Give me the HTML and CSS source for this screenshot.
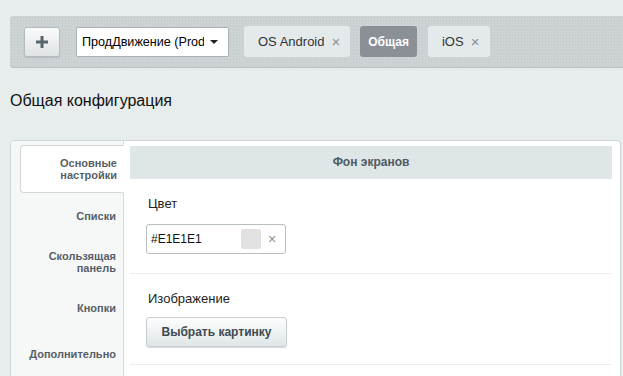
FILE: index.html
```
<!DOCTYPE html>
<html lang="ru">
<head>
<meta charset="UTF-8" />
<title>Общая конфигурация</title>
<link rel="stylesheet" href="styles.css">
</head>
<body>

<div class="toolbar">
  <button class="add-btn" type="button">
    <svg width="14" height="14" viewBox="0 0 14 14"><path d="M7 1v12M1 7h12" stroke="#5a666d" stroke-width="3"/></svg>
  </button>
  <div class="app-select">
    <span class="app-select-text">ПродДвижение (ProdDvizhenie)</span>
    <span class="app-select-arrow"></span>
  </div>
  <div class="platform-tab">OS Android <span class="tab-close">×</span></div>
  <div class="platform-tab active">Общая</div>
  <div class="platform-tab ios">iOS <span class="tab-close">×</span></div>
</div>

<h1 class="page-title">Общая конфигурация</h1>

<div class="config-panel">
  <div class="side-tabs">
    <div class="side-tab active">Основные<br>настройки</div>
    <div class="side-tab">Списки</div>
    <div class="side-tab">Скользящая<br>панель</div>
    <div class="side-tab">Кнопки</div>
    <div class="side-tab">Дополнительно</div>
  </div>
  <div class="panel-body">
    <div class="section-head">Фон экранов</div>
    <div class="field">
      <div class="field-label">Цвет</div>
      <div class="color-input">
        <span class="color-value">#E1E1E1</span>
        <span class="color-swatch"></span>
        <span class="color-clear">×</span>
      </div>
    </div>
    <div class="field">
      <div class="field-label">Изображение</div>
      <button class="pick-btn" type="button">Выбрать картинку</button>
    </div>
  </div>
</div>

</body>
</html>
```

FILE: styles.css
```
body {
  margin: 0;
  background: #e7ecec;
  font-family: 'Liberation Sans', Arial, sans-serif;
  color: #222;
  overflow: hidden;
  height: 376px;
}

/* верхняя панель */
.toolbar {
  display: flex; align-items: center;
  margin: 16px -20px 0 10px;
  height: 51px;
  padding-left: 14px;
  background-color: #cdd3d5;
  background-image: radial-gradient(#c2c8ca 0.8px, transparent 1px);
  background-size: 3px 3px;
  border-bottom: 1px solid #b9c0c3;
  border-radius: 3px 0 0 3px;
}
.add-btn {
  width: 36px; height: 30px; padding: 0;
  display: flex; align-items: center; justify-content: center;
  background: linear-gradient(#fbfbfb, #dfe3e5);
  border: 1px solid #b5bcc0; border-radius: 3px;
  box-shadow: 0 1px 1px rgba(0,0,0,0.12);
}
.app-select {
  margin-left: 16px;
  width: 153px; height: 30px; box-sizing: border-box;
  display: flex; align-items: center;
  padding: 0 10px 0 5px;
  background: #fff;
  border: 1px solid #a9b1b5; border-radius: 2px;
  font-size: 12.6px; color: #000;
}
.app-select-text {
  flex: 1; overflow: hidden; white-space: nowrap;
  text-overflow: clip;
}
.app-select-arrow {
  margin-left: 6px;
  border-left: 4px solid transparent; border-right: 4px solid transparent;
  border-top: 4px solid #222;
}
.platform-tab {
  margin-left: 10px;
  height: 31px; box-sizing: border-box;
  display: flex; align-items: center;
  padding: 0 10px 0 14px;
  background: #e4eaec; border-radius: 3px;
  font-size: 13px; color: #333;
}
.app-select + .platform-tab { margin-left: 15px; }
.platform-tab.active {
  padding: 0 8px;
  background: #8b8f96; color: #fff;
  font-weight: bold; font-size: 12px;
}
.platform-tab.ios { margin-left: 11px; padding: 0 11px 0 14px; }
.tab-close {
  margin-left: 7px;
  font-size: 15px; color: #8a8f93;
}

.page-title {
  margin: 23px 0 0 10px;
  font-size: 16px; line-height: 20px; font-weight: normal; color: #111;
}

/* панель настроек */
.config-panel {
  display: flex;
  margin: 29px 0 0 10px;
  width: 611px; height: 260px; box-sizing: border-box;
  background: #fff;
  border: 1px solid #cfd5d8; border-radius: 4px;
}
.side-tabs {
  width: 113px; flex-shrink: 0;
  padding: 4px 0 0 9px; box-sizing: border-box;
  background: #f6f8f8;
  border-right: 1px solid #d5dadd;
  border-top-left-radius: 4px;
}
.side-tab {
  height: 46px; box-sizing: border-box;
  display: flex; align-items: center; justify-content: flex-end;
  padding-right: 6px;
  text-align: right;
  font-size: 11px; line-height: 12px; font-weight: bold; color: #565f66;
  border: 1px solid transparent;
}
.side-tab.active {
  height: 48px;
  margin-right: -1px;
  background: #fff;
  border-color: #d0d6d9; border-right-color: #fff;
  border-radius: 4px 0 0 4px;
}

.panel-body {
  flex: 1;
  padding: 5px 8px 0 6px;
}
.section-head {
  height: 33px; line-height: 33px;
  background: #dfe6e8;
  text-align: center;
  font-size: 12px; font-weight: bold; color: #4e5960;
}
.field {
  padding: 17px 0 19px 16px;
  border-bottom: 1px solid #eceff0;
}
.field + .field { padding-bottom: 17px; }
.field-label {
  padding-left: 2px;
  font-size: 13px; line-height: 16px; color: #222;
  margin-bottom: 12px;
}
.field + .field .field-label { margin-bottom: 10px; }
.color-input {
  width: 140px; height: 30px; box-sizing: border-box;
  display: flex; align-items: center;
  padding: 0 2px 0 4px;
  border: 1px solid #b8bfc3; border-radius: 3px;
  background: #fff;
}
.color-value { flex: 1; font-size: 12px; color: #111; }
.color-swatch {
  width: 20px; height: 20px;
  background: #e1e1e1; border-radius: 2px;
}
.color-clear {
  width: 22px; text-align: center;
  font-size: 14px; color: #8a8f93;
}
.pick-btn {
  width: 141px; height: 30px;
  padding: 0;
  font-family: inherit; font-size: 12px; font-weight: bold; color: #3f4a52;
  background: linear-gradient(#fdfdfd, #dfe6e8);
  border: 1px solid #c7cdd1; border-radius: 3px;
  box-shadow: 0 1px 1px rgba(0,0,0,0.15);
}
```
